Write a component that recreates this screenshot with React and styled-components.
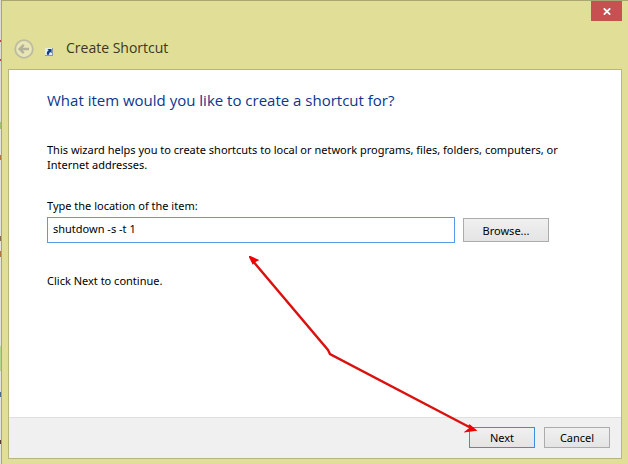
import React, {useState} from 'react';
import styled, {createGlobalStyle} from 'styled-components';

function BackIcon() {
  return (
    <svg width="20" height="20" viewBox="0 0 20 20" fill="none" aria-hidden="true">
      <circle cx="10" cy="10" r="8.8" fill="#e9e6b6" stroke="#bdbba0" strokeWidth="1.8"/>
      <path d="M15 10H6M9.8 5.8L5.6 10l4.2 4.2" stroke="#b3b199" strokeWidth="2.4"/>
    </svg>
  );
}

function ShortcutIcon() {
  return (
    <svg width="8" height="8" viewBox="0 0 8 8" aria-hidden="true">
      <rect width="8" height="8" fill="#8d9aa0"/>
      <rect width="7" height="7" fill="#e6eef4"/>
      <path d="M2.4 1H6.6V5.2L5.4 4.1C4.5 4.6 4.1 5.2 4 6.8H2C1.4 4.8 2.2 3.2 3.7 2.3Z" fill="#123f80"/>
    </svg>
  );
}

function CloseIcon() {
  return (
    <svg width="8" height="7" viewBox="0 0 8 7" aria-hidden="true">
      <path d="M0.8 0.3L7.2 6.7M7.2 0.3L0.8 6.7" stroke="#fff" strokeWidth="1.7"/>
    </svg>
  );
}

// red guide from the text box to the Next button
function GuideArrow() {
  return (
    <Guide width="230" height="180" viewBox="0 0 230 180" aria-hidden="true">
      <path d="M3 4L79 94L81 98L224 173" fill="none" stroke="#d91210" strokeWidth="2.4"/>
      <path d="M1 1L8 4L6 5L4 7Z" fill="#f00000" stroke="#f00000" strokeWidth="2"/>
      <path d="M226 174L220 169L222 172L218 175Z" fill="#f00000" stroke="#f00000" strokeWidth="2"/>
    </Guide>
  );
}

function App() {
  const [location, setLocation] = useState('shutdown -s -t 1');

  return (
    <Desktop>
      <GlobalStyle/>
      <Behind/>
      <Window>
        <TitleBar>
          <CloseButton type="button" aria-label="Close"><CloseIcon/></CloseButton>
          <BackButton type="button" aria-label="Back" disabled><BackIcon/></BackButton>
          <ShortcutIcon/>
          <WindowTitle>Create Shortcut</WindowTitle>
        </TitleBar>
        <Panel>
          <Content>
            <Heading>What item would you like to create a shortcut for?</Heading>
            <Description>
              This wizard helps you to create shortcuts to local or network programs, files, folders, computers, or Internet addresses.
            </Description>
            <Label htmlFor="location">Type the location of the item:</Label>
            <LocationRow>
              <LocationInput
                id="location"
                type="text"
                value={location}
                onChange={(e) => setLocation(e.target.value)}
              />
              <Button type="button" $wide>Browse...</Button>
            </LocationRow>
            <Hint>Click Next to continue.</Hint>
          </Content>
          <Footer>
            <Button type="button" $primary>Next</Button>
            <Button type="button">Cancel</Button>
          </Footer>
          <GuideArrow/>
        </Panel>
      </Window>
    </Desktop>
  );
}

const GlobalStyle = createGlobalStyle`
  * {
    box-sizing: border-box;
  }

  body {
    margin: 0;
    color: #000;
    font-family: 'Noto Sans', 'Open Sans', sans-serif;
    font-size: 11px;
    line-height: 15px;
  }

  button, input {
    font: inherit;
    color: inherit;
  }
`

const Desktop = styled.div`
  display: flex;
  min-height: 100vh;
`

// sliver of the page that shows behind the window
const Behind = styled.div`
  width: 1px;
  background: linear-gradient(
    #dcdcd4 40px, #b04a3c 40px 42px, #dcdcd4 42px 59px, #b04a3c 59px 61px,
    #dcdcd4 61px 122px, #9fc46c 122px 129px, #e4e4de 129px 155px, #b5763c 155px 160px,
    #e4e4de 160px 236px, #8a6a4a 236px 241px, #e4e4de 241px 251px, #b5763c 251px 257px,
    #e4e4de 257px 346px, #b4d68c 346px 371px, #e4e4de 371px 392px, #4a6a8a 392px 397px,
    #e4e4de 397px 440px, #5a3a30 440px 444px, #e4e4de 444px
  );
`

const Window = styled.div`
  flex: 1;
  display: flex;
  flex-direction: column;
  padding: 0 6px 5px 6px;
  background: #e1de97;
  border-top: 1px solid #a9a671;
  border-left: 1px solid #a9a671;
`

const TitleBar = styled.header`
  display: flex;
  flex-wrap: wrap;
  align-items: center;
  padding-bottom: 10px;

  & > svg {
    margin: 6px 13px 0 11px;
  }
`

const CloseButton = styled.button`
  display: flex;
  align-items: center;
  justify-content: center;
  width: 31px;
  height: 20px;
  margin: 0 0 18px calc(100% - 31px);
  padding: 0;
  border: 0;
  background: #c75050;
`

const BackButton = styled.button`
  display: flex;
  margin-left: 6px;
  padding: 0;
  border: 0;
  background: none;
`

const WindowTitle = styled.h1`
  margin: 0;
  padding-bottom: 2px;
  color: #3a3920;
  font-family: 'Open Sans', sans-serif;
  font-size: 14px;
  font-weight: 400;
  line-height: 18px;
`

const Panel = styled.main`
  position: relative;
  flex: 1;
  display: flex;
  flex-direction: column;
  border: 1px solid #b9b67c;
  background: #fff;
`

const Content = styled.section`
  flex: 1;
  padding: 19px 38px;
`

const Heading = styled.h2`
  margin: 0 0 31px;
  color: #0b3690;
  font-family: 'Open Sans', sans-serif;
  font-size: 15px;
  font-weight: 400;
  line-height: 22px;
`

const Description = styled.p`
  margin: 0 0 26px;
`

const Label = styled.label`
  display: block;
  margin-bottom: 4px;
`

const LocationRow = styled.div`
  display: flex;
  align-items: center;
  gap: 8px;
  margin-bottom: 30px;
  padding-right: 34px;
`

const LocationInput = styled.input`
  flex: 1;
  min-width: 0;
  height: 26px;
  padding: 0 5px 4px;
  border: 1px solid #569de5;
  background: #fff;
  outline: none;
`

const Button = styled.button`
  width: ${({$wide}) => ($wide ? '86px' : '66px')};
  height: ${({$wide}) => ($wide ? '24px' : '21px')};
  padding: 0;
  border: 1px solid ${({$primary}) => ($primary ? '#3c8fe0' : '#acacac')};
  background: linear-gradient(#f0f0f0, #e4e4e4);
`

const Hint = styled.p`
  margin: 0;
`

const Footer = styled.footer`
  display: flex;
  justify-content: flex-end;
  gap: 9px;
  padding: 9px 11px 10px;
  border-top: 1px solid #dfdfdf;
  background: #f0f0f0;
`

const Guide = styled.svg`
  position: absolute;
  top: 186px;
  left: 240px;
  pointer-events: none;
`

export default App;
